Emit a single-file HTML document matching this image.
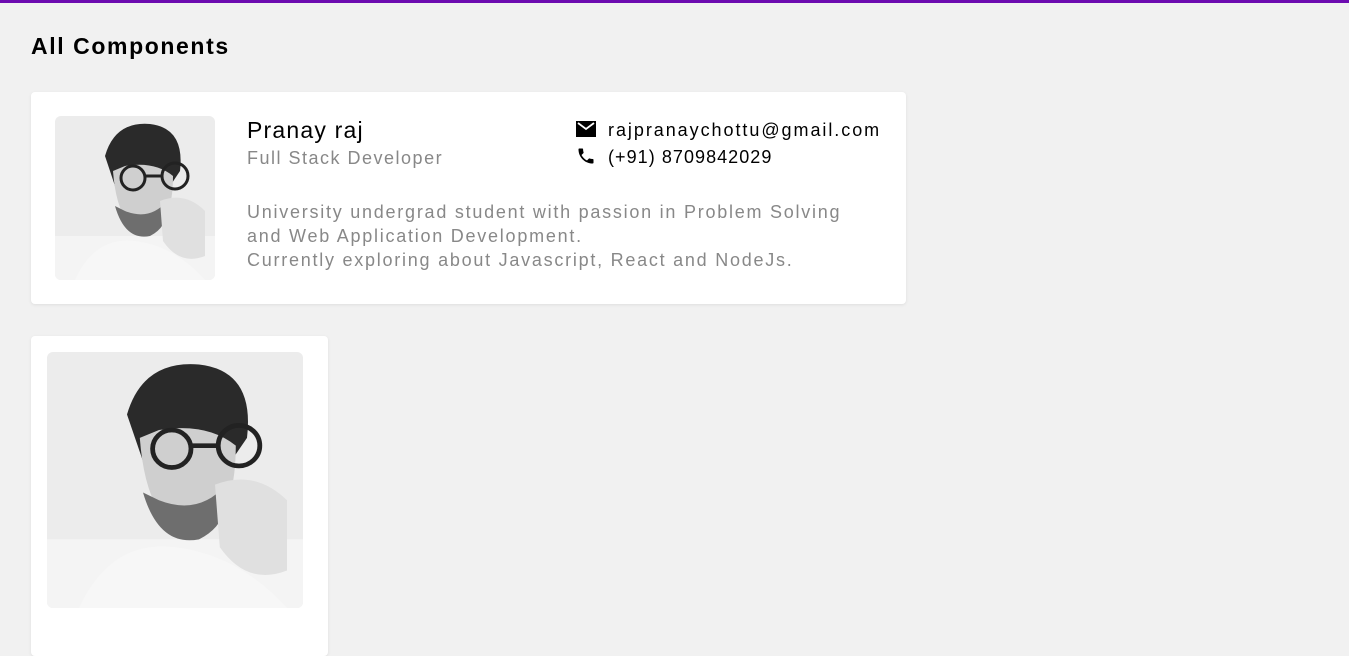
<!DOCTYPE html>
<html><head><style>
body{margin:0;width:1349px;height:639px;overflow:hidden;background:#f1f1f1;font-family:"Liberation Sans",sans-serif;position:relative}
.bar{position:absolute;left:0;top:0;width:1349px;height:3px;background:#6c0bb0}
h1{position:absolute;left:31px;top:33px;margin:0;font-size:23px;font-weight:bold;color:#000;letter-spacing:1.6px}
.card{position:absolute;background:#fff;border-radius:4px;box-shadow:0 1px 3px rgba(0,0,0,.08)}
.ph{position:absolute;border-radius:6px;overflow:hidden}
.t{position:absolute;white-space:nowrap}
</style></head><body>
<div class="bar"></div>
<h1>All Components</h1>
<svg width="0" height="0" style="position:absolute"><defs>
<symbol id="p" viewBox="0 0 160 164">
<rect width="160" height="164" fill="#ececec"/>
<rect x="0" y="120" width="160" height="44" fill="#f4f4f4"/>
<path d="M50 40 Q60 5 95 8 Q130 12 125 55 L115 70 L60 70 Z" fill="#2a2a2a"/>
<path d="M58 55 Q62 110 90 118 Q118 112 118 60 Q100 45 70 50 Z" fill="#cfcfcf"/>
<path d="M60 90 Q70 125 95 120 Q115 110 112 85 Q95 105 70 95 Z" fill="#6e6e6e"/>
<circle cx="78" cy="62" r="12" fill="none" stroke="#222" stroke-width="3"/>
<circle cx="120" cy="60" r="13" fill="none" stroke="#222" stroke-width="3"/>
<path d="M90 60 L107 60" stroke="#222" stroke-width="3"/>
<path d="M105 85 Q130 75 150 95 L150 140 Q125 150 108 125 Z" fill="#e0e0e0"/>
<path d="M20 164 Q40 120 80 125 Q120 130 150 164 Z" fill="#f7f7f7"/>
</symbol></defs></svg>
<div class="card" style="left:31px;top:92px;width:875px;height:212px">
<svg class="ph" style="left:24px;top:24px" width="160" height="164"><use href="#p"/></svg>
<div class="t" style="left:216px;top:25px;font-size:23px;color:#000;letter-spacing:1.2px">Pranay raj</div>
<div class="t" style="left:216px;top:56px;font-size:18px;color:#888;letter-spacing:1.5px">Full Stack Developer</div>
<div class="t" style="left:216px;top:108px;font-size:18px;color:#888;line-height:24px;letter-spacing:1.75px">University undergrad student with passion in Problem Solving<br>and Web Application Development.<br>Currently exploring about Javascript, React and NodeJs.</div>
<svg class="t" style="left:545px;top:29px" width="20" height="16" viewBox="0 0 20 16"><path d="M0 0H20V16H0Z" fill="#000"/><path d="M2 2L10 8L18 2" fill="none" stroke="#fff" stroke-width="1.8"/></svg>
<svg class="t" style="left:545px;top:54px" width="20" height="20" viewBox="0 0 24 24"><path d="M6.6 10.8c1.4 2.8 3.8 5.1 6.6 6.6l2.2-2.2c.3-.3.7-.4 1-.2 1.1.4 2.3.6 3.6.6.6 0 1 .4 1 1V20c0 .6-.4 1-1 1C10.6 21 3 13.4 3 4c0-.6.4-1 1-1h3.5c.6 0 1 .4 1 1 0 1.3.2 2.5.6 3.6.1.3 0 .7-.2 1z" fill="#000"/></svg>
<div class="t" style="left:577px;top:28px;font-size:18px;color:#000;letter-spacing:1.95px">rajpranaychottu@gmail.com</div>
<div class="t" style="left:577px;top:55px;font-size:18px;color:#000;letter-spacing:1.05px">(+91) 8709842029</div>
</div>
<div class="card" style="left:31px;top:336px;width:297px;height:320px">
<svg class="ph" style="left:16px;top:16px" width="256" height="256" viewBox="0 0 160 164" preserveAspectRatio="none"><use href="#p"/></svg>
</div>
</body></html>
